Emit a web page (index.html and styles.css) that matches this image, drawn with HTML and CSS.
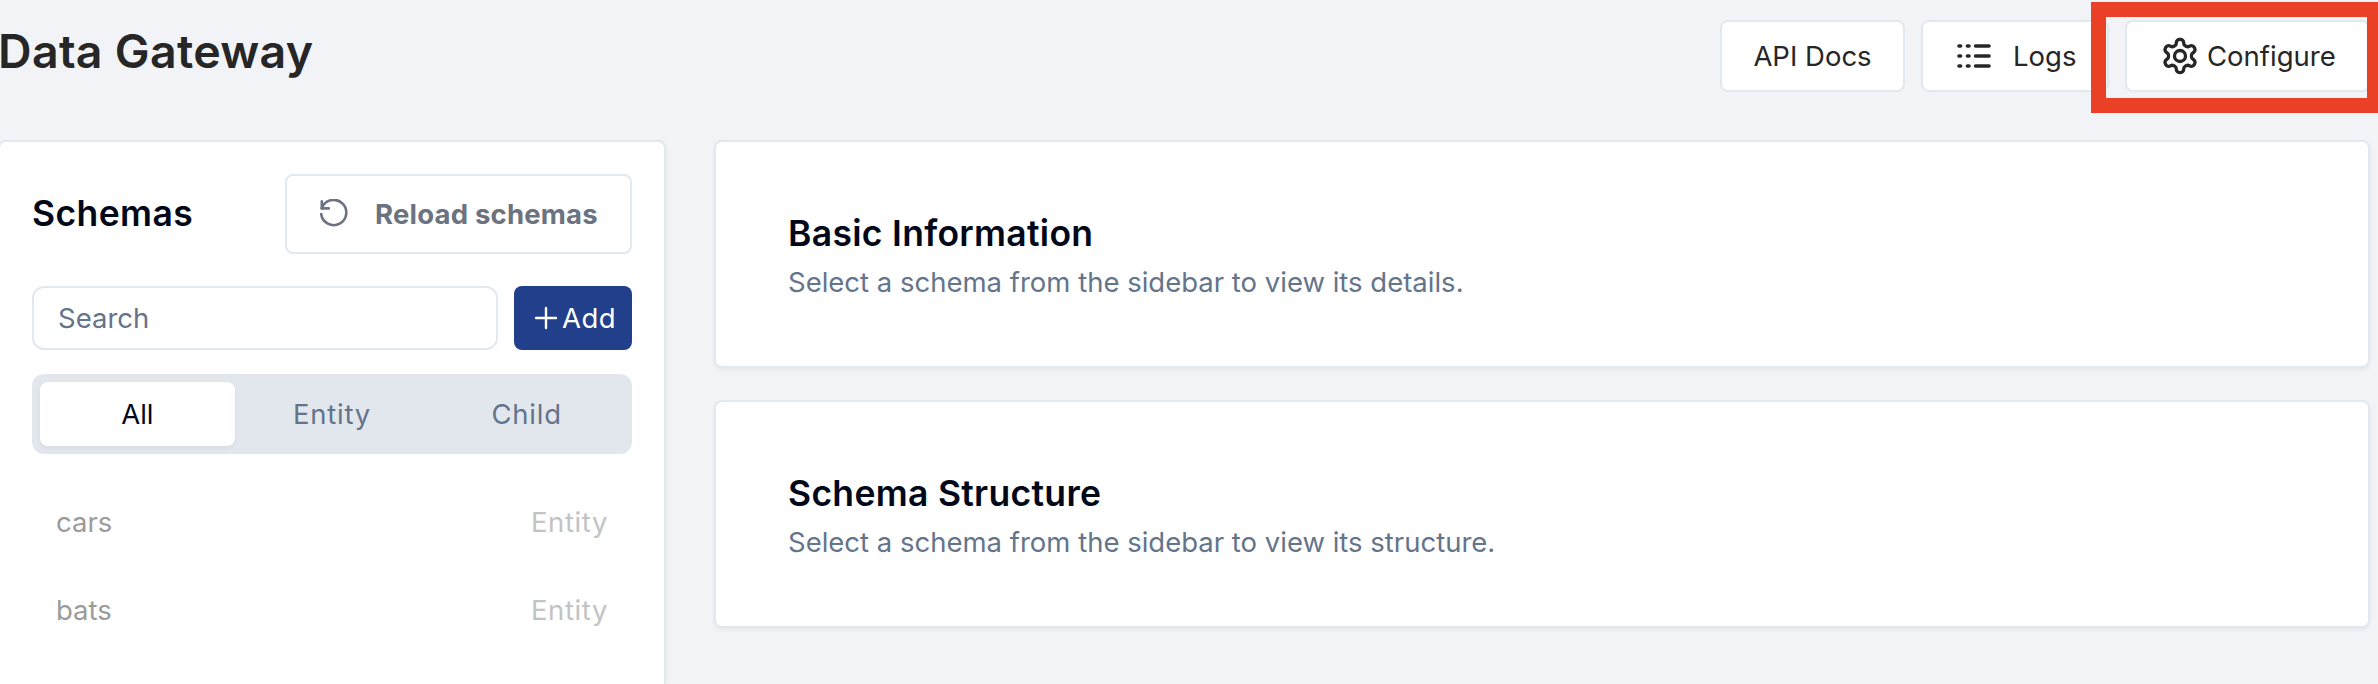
FILE: index.html
```html
<!DOCTYPE html>
<html lang="en">
    <head>
        <meta charset="utf-8">
        <title>Data Gateway</title>
        <link rel="stylesheet" href="styles.css">
    </head>

    <body>
        <header class="header">
            <h1>Data Gateway</h1>
            <div class="actions">
                <button class="button docs">API Docs</button>
                <button class="button logs">
                    <svg width="34" height="26" viewBox="0 0 34 26" stroke="currentColor" stroke-width="3.6" stroke-linecap="round">
                        <path d="M2 3h1.6M10.4 3h1.6M18.6 3h13.4M2 13h1.6M10.4 13h1.6M18.6 13h13.4M2 23h1.6M10.4 23h1.6M18.6 23h13.4"/>
                    </svg>
                    Logs
                </button>
                <div class="configure-wrap">
                    <button class="button configure">
                        <svg width="40" height="40" viewBox="0 0 24 24" fill="none" stroke="currentColor" stroke-width="2" stroke-linecap="round" stroke-linejoin="round">
                            <path d="M12.22 2h-.44a2 2 0 0 0-2 2v.18a2 2 0 0 1-1 1.73l-.43.25a2 2 0 0 1-2 0l-.15-.08a2 2 0 0 0-2.73.73l-.22.38a2 2 0 0 0 .73 2.73l.15.1a2 2 0 0 1 1 1.72v.51a2 2 0 0 1-1 1.74l-.15.09a2 2 0 0 0-.73 2.73l.22.38a2 2 0 0 0 2.73.73l.15-.08a2 2 0 0 1 2 0l.43.25a2 2 0 0 1 1 1.73V20a2 2 0 0 0 2 2h.44a2 2 0 0 0 2-2v-.18a2 2 0 0 1 1-1.73l.43-.25a2 2 0 0 1 2 0l.15.08a2 2 0 0 0 2.73-.73l.22-.39a2 2 0 0 0-.73-2.73l-.15-.08a2 2 0 0 1-1-1.74v-.5a2 2 0 0 1 1-1.74l.15-.09a2 2 0 0 0 .73-2.73l-.22-.38a2 2 0 0 0-2.73-.73l-.15.08a2 2 0 0 1-2 0l-.43-.25a2 2 0 0 1-1-1.73V4a2 2 0 0 0-2-2z"/>
                            <circle cx="12" cy="12" r="3.3"/>
                        </svg>
                        Configure
                    </button>
                    <div class="highlight"></div>
                </div>
            </div>
        </header>

        <main class="content">
            <aside class="card sidebar">
                <div class="sidebar-top">
                    <h2>Schemas</h2>
                    <button class="button reload">
                        <svg width="30" height="30" viewBox="0 0 30 30" fill="none" stroke="currentColor" stroke-width="2.6" stroke-linecap="round" stroke-linejoin="round">
                            <path d="M2.8 2.4v7h7"/>
                            <path d="M2.8 9.4A12.6 12.6 0 1 1 2.2 15"/>
                        </svg>
                        Reload schemas
                    </button>
                </div>

                <div class="search-row">
                    <input class="search" type="text" placeholder="Search">
                    <button class="add">
                        <svg width="24" height="24" viewBox="0 0 24 24" stroke="currentColor" stroke-width="2.4" stroke-linecap="round">
                            <path d="M12 2v20M2 12h20"/>
                        </svg>
                        Add
                    </button>
                </div>

                <div class="tabs">
                    <button class="tab active">All</button>
                    <button class="tab">Entity</button>
                    <button class="tab">Child</button>
                </div>

                <ul class="schemas">
                    <li><span>cars</span><span class="type">Entity</span></li>
                    <li><span>bats</span><span class="type">Entity</span></li>
                </ul>
            </aside>

            <div class="details">
                <section class="card panel">
                    <h2>Basic Information</h2>
                    <p>Select a schema from the sidebar to view its details.</p>
                </section>
                <section class="card panel">
                    <h2>Schema Structure</h2>
                    <p>Select a schema from the sidebar to view its structure.</p>
                </section>
            </div>
        </main>
    </body>
</html>
```
FILE: styles.css
```css
*{
    box-sizing: border-box;
}

body{
    margin: 0;
    background: #f2f3f7;
    color: #262626;
    font-family: Inter, "Liberation Sans", sans-serif;
    font-size: 27.5px;
}

h1, h2, p, ul{
    margin: 0;
    padding: 0;
}

h1{
    font-size: 46.5px;
    font-weight: 600;
    line-height: 68px;
    letter-spacing: 0.3px;
    margin-top: -3px;
}

h2{
    color: #020817;
    font-size: 35.5px;
    font-weight: 600;
    line-height: 44px;
    letter-spacing: 0.4px;
}

button{
    font: inherit;
    color: inherit;
    padding: 0;
    border: 0;
    white-space: nowrap;
}

svg{
    flex: none;
}

.header{
    display: flex;
    justify-content: space-between;
    height: 140px;
    padding: 20px 8px 0 0;
}

.header h1{
    margin-left: -2px;
}

.actions{
    display: flex;
    gap: 16px;
}

.button{
    display: flex;
    align-items: center;
    height: 72px;
    background: #fff;
    border: 2px solid #e2e8f0;
    border-radius: 8px;
}

.docs{
    width: 185px;
    justify-content: center;
}

.logs{
    width: 188px;
    padding-left: 34px;
    gap: 22px;
}

.configure-wrap{
    position: relative;
}

.configure{
    width: 245px;
    padding-left: 33px;
    gap: 7px;
}

/* callout frame around the Configure button */
.highlight{
    position: absolute;
    top: -18px;
    left: -34px;
    width: 287px;
    height: 111px;
    border: 15px solid #ea4126;
    border-right-width: 11px;
}

.content{
    display: flex;
    gap: 48px;
    margin: 0 8px 0 -2px;
}

.card{
    background: #fff;
    border: 2px solid #e2e8f0;
    border-radius: 8px;
    box-shadow: 0 2px 4px rgba(0, 0, 0, 0.05);
}

.sidebar{
    width: 668px;
    height: 544px;
    padding: 32px 32px 0;
    border-bottom: 0;
    border-radius: 8px 8px 0 0;
}

.sidebar-top{
    display: flex;
    justify-content: space-between;
    align-items: center;
}

.reload{
    width: 347px;
    height: 80px;
    padding-left: 32px;
    gap: 26px;
    color: #6b7280;
    font-weight: 700;
    letter-spacing: 0.2px;
}

.search-row{
    display: flex;
    gap: 16px;
    margin-top: 32px;
}

.search{
    width: 466px;
    height: 64px;
    padding: 0 24px;
    border: 2px solid #e2e8f0;
    border-radius: 12px;
    font: inherit;
}

.search::placeholder{
    color: #64748b;
}

.add{
    display: flex;
    align-items: center;
    width: 118px;
    height: 64px;
    padding-left: 20px;
    gap: 4px;
    background: #213f8a;
    color: #fff;
    border-radius: 8px;
    letter-spacing: 0.5px;
}

.tabs{
    display: flex;
    height: 80px;
    margin-top: 24px;
    padding: 8px;
    background: #e2e7ee;
    border-radius: 12px;
}

.tab{
    flex: 1;
    background: none;
    color: #64748b;
    border-radius: 8px;
    letter-spacing: 0.8px;
}

.tab.active{
    background: #fff;
    color: #020817;
    letter-spacing: 0;
    box-shadow: 0 2px 4px rgba(0, 0, 0, 0.05);
}

.schemas{
    list-style: none;
    margin-top: 24px;
    color: #9b9b9b;
}

.schemas li{
    display: flex;
    justify-content: space-between;
    align-items: center;
    height: 88px;
    padding: 0 24px;
}

.type{
    color: #c3c3c3;
    letter-spacing: 0.6px;
}

.details{
    flex: 1;
    display: flex;
    flex-direction: column;
    gap: 32px;
}

.panel{
    height: 228px;
    padding: 70px 72px;
}

.panel h2{
    letter-spacing: 0.3px;
}

.panel p{
    margin-top: 6px;
    color: #64748b;
    line-height: 40px;
}
```
